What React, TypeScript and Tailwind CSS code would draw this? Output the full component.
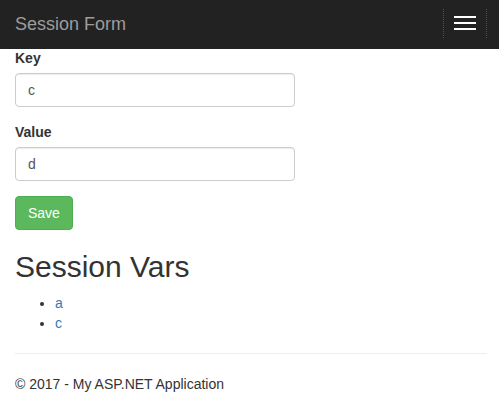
export default function App() {
  const vars = ["a", "c"];

  return (
    <div className="min-h-screen bg-white text-[14px] leading-[20px] text-[#333]" style={{ fontFamily: '"Liberation Sans", Arial, sans-serif' }}>
      {/* Navbar */}
      <nav className="h-[49px] bg-[#222] flex items-start justify-between pl-[15px] pr-[12px]">
        <span className="mt-[14px] text-[18px] leading-[20px] text-[#9d9d9d]">Session Form</span>
        <button className="mt-[9px] w-[44px] h-[29px] flex flex-col items-center justify-start pt-[7px] gap-[4px] border-x border-dotted border-[#5a4a55]">
          <span className="block w-[22px] h-[2px] bg-white" />
          <span className="block w-[22px] h-[2px] bg-white" />
          <span className="block w-[22px] h-[2px] bg-white" />
        </button>
      </nav>

      <div className="-mt-px pl-[15px] pr-[12px]">
        {/* Form */}
        <div className="mb-[15px]">
          <label className="block mb-[5px] font-bold">Key</label>
          <input
            defaultValue="c"
            className="block w-full max-w-[280px] h-[34px] px-[12px] py-[6px] border border-[#ccc] rounded-[4px] text-[#555] outline-none shadow-[inset_0_1px_1px_rgba(0,0,0,0.075)]"
          />
        </div>
        <div className="mb-[15px]">
          <label className="block mb-[5px] font-bold">Value</label>
          <input
            defaultValue="d"
            className="block w-full max-w-[280px] h-[34px] px-[12px] py-[6px] border border-[#ccc] rounded-[4px] text-[#555] outline-none shadow-[inset_0_1px_1px_rgba(0,0,0,0.075)]"
          />
        </div>
        <button className="h-[34px] px-[12px] rounded-[4px] bg-[#5cb85c] border border-[#4cae4c] text-white">
          Save
        </button>

        {/* Session vars */}
        <h2 className="mt-[20px] mb-[10px] text-[30px] leading-[33px] font-normal">Session Vars</h2>
        <ul className="list-disc pl-[40px]">
          {vars.map((v) => (
            <li key={v}>
              <a className="text-[#337ab7]" href="#">{v}</a>
            </li>
          ))}
        </ul>

        <hr className="mt-[20px] mb-[20px] border-0 border-t border-[#eee]" />
        <footer>
          <p>© 2017 - My ASP.NET Application</p>
        </footer>
      </div>
    </div>
  );
}
